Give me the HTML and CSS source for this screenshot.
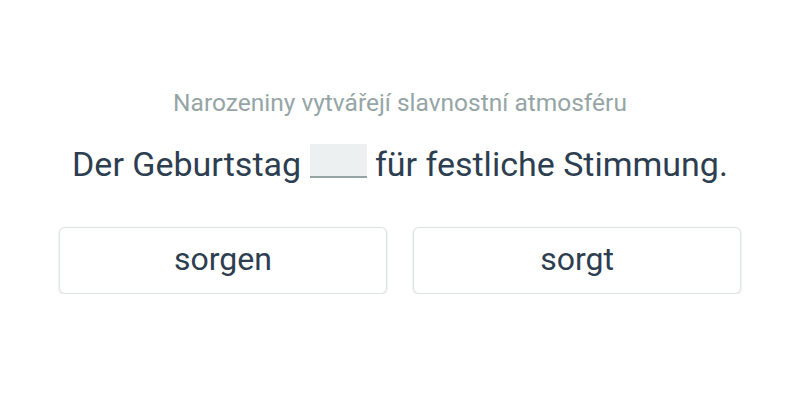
FILE: index.html
```html
<!DOCTYPE html>
<html lang="cs">
  <head>
    <meta charset="UTF-8" />
    <meta name="viewport" content="width=device-width, initial-scale=1.0" />
    <title>Doplňte slovo</title>
    <link rel="stylesheet" href="styles.css">
  </head>
  <body>
    <div class="exercise">
      <p class="translation">Narozeniny vytvářejí slavnostní atmosféru</p>
      <p class="sentence">Der Geburtstag <span class="blank"></span> für festliche Stimmung.</p>
      <div class="options">
        <button class="option">sorgen</button>
        <button class="option">sorgt</button>
      </div>
    </div>
  </body>
</html>
```
FILE: styles.css
```css
body {
  margin: 0;
  background-color: #fff;
  font-family: Roboto, "Noto Sans", sans-serif;
  color: #2c3e50;
}
.exercise {
  width: 682px;
  margin: 0 auto;
  padding-top: 89px;
  text-align: center;
}
.translation {
  margin: 0;
  font-size: 24.5px;
  line-height: 28px;
  color: #95a5a6;
}
.sentence {
  margin: 27px 0 0;
  font-size: 34px;
  line-height: 40px;
}
.blank {
  display: inline-block;
  width: 57px;
  height: 32px;
  background-color: #ecf0f1;
  border-bottom: 2px solid #95a5a6;
  vertical-align: -2px;
}
.options {
  display: grid;
  grid-template-columns: 1fr 1fr;
  column-gap: 26px;
  margin-top: 43px;
}
.option {
  height: 67px;
  padding: 0 0 4px;
  background-color: #fff;
  border: 1px solid #dde2e5;
  border-radius: 6px;
  box-shadow: 0 1px 3px rgba(0, 0, 0, 0.1);
  font-family: inherit;
  font-size: 32px;
  color: #2c3e50;
  cursor: pointer;
}
.option:hover {
  background-color: #f7f9fa;
}
```
